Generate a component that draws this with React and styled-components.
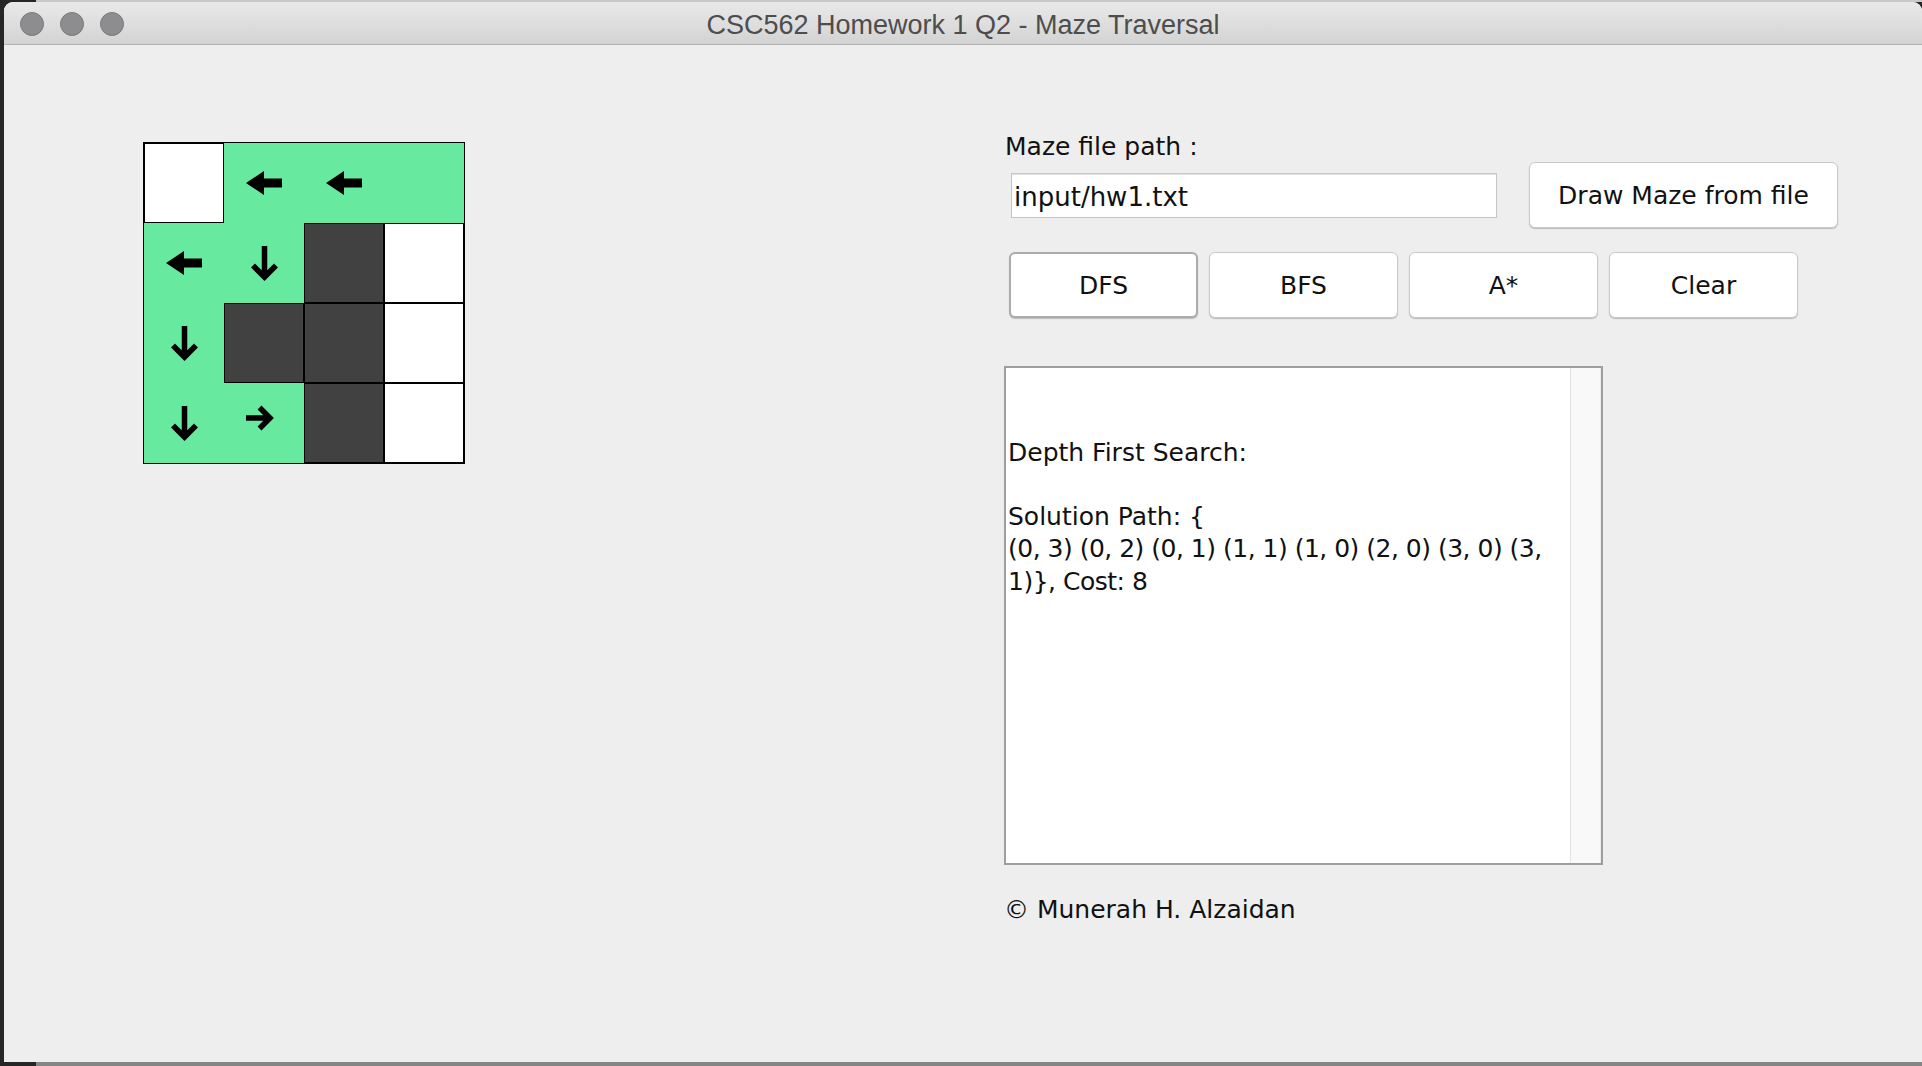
import React from 'react'
import styled, { createGlobalStyle } from 'styled-components'

const GlobalStyle = createGlobalStyle`
  html, body {
    margin: 0;
    padding: 0;
    background: #262626;
    overflow: hidden;
  }
`

const COLORS = {
  BG: '#eeeeee',
  GREEN: '#67e9a0',
  WALL: '#414141',
  TEXT: '#111111',
}

const UI_FONT = `"DejaVu Sans", "Liberation Sans", sans-serif`

const Desktop = styled.div`
  width: 1922px;
  height: 1066px;
  display: flex;
  flex-direction: column;
`

const EdgeStrip = styled.div`
  height: ${props => props.h}px;
  background: linear-gradient(to right, #262626 0 36px, ${props => props.tone} 36px);
`

const Window = styled.div`
  margin-left: 4px;
  width: 1918px;
  height: 1060px;
  display: flex;
  flex-direction: column;
  background: ${COLORS.BG};
  border-radius: 9px 9px 0 0;
  overflow: hidden;
`

const TitleBar = styled.div`
  position: relative;
  height: 42px;
  flex-shrink: 0;
  display: flex;
  align-items: center;
  justify-content: center;
  background: linear-gradient(#e9e9e9, #d3d3d3);
  border-bottom: 1px solid #b2b2b2;
`

const Lights = styled.div`
  position: absolute;
  left: 16px;
  top: 10px;
  display: flex;
  gap: 16px;
`

const Light = styled.span`
  width: 24px;
  height: 24px;
  border-radius: 50%;
  box-sizing: border-box;
  background: #8d8d8f;
  border: 1px solid #7a7a7c;
`

const Title = styled.div`
  padding-top: 5px;
  font-family: "Liberation Sans", Arial, sans-serif;
  font-size: 27px;
  color: #4d4d4d;
`

const Content = styled.div`
  flex: 1;
  display: flex;
  font-family: ${UI_FONT};
  color: ${COLORS.TEXT};
`

const LeftPane = styled.div`
  width: 1000px;
  box-sizing: border-box;
  padding: 97px 0 0 139px;
`

const MazeGrid = styled.div`
  display: grid;
  grid-template-columns: repeat(4, 80px);
  grid-template-rows: repeat(4, 80px);
  width: 320px;
  border: 1px solid #000;
`

const Cell = styled.div`
  display: flex;
  align-items: center;
  justify-content: center;
  background: ${props => props.kind === 'wall' ? COLORS.WALL : props.kind === 'open' ? '#ffffff' : COLORS.GREEN};
  box-shadow: ${props => props.kind === 'path' ? 'none' : 'inset 0 0 0 1px #000'};
`

const RightPane = styled.div`
  padding-top: 87px;
  display: flex;
  flex-direction: column;
`

const Label = styled.div`
  height: 30px;
  line-height: 30px;
  font-size: 25px;
  margin-left: 1px;
`

const FileRow = styled.div`
  display: flex;
  align-items: center;
  height: 66px;
`

const PathField = styled.div`
  margin-left: 7px;
  width: 486px;
  height: 45px;
  box-sizing: border-box;
  padding: 3px 0 0 2px;
  display: flex;
  align-items: center;
  background: #fff;
  border: 1px solid #c6c6c6;
  box-shadow: inset 0 1px 0 #e2e2e2;
  font-size: 26px;
`

const Button = styled.div`
  width: ${props => props.w}px;
  height: 66px;
  margin-left: ${props => props.ml || 0}px;
  box-sizing: border-box;
  display: flex;
  align-items: center;
  justify-content: center;
  background: #fff;
  border: ${props => props.focused ? '2px solid #ababab' : '1px solid #c8c8c8'};
  border-radius: 6px;
  box-shadow: 0 1px 1px rgba(0, 0, 0, 0.22);
  font-size: 25px;
`

const SearchRow = styled.div`
  display: flex;
  gap: 11px;
  margin: 24px 0 0 5px;
`

const OutputBox = styled.div`
  margin-top: 48px;
  width: 599px;
  height: 499px;
  box-sizing: border-box;
  display: flex;
  background: #fff;
  border: 2px solid #9e9e9e;
`

const OutputText = styled.div`
  flex: 1;
  padding: 4px 0 0 2px;
  font-size: 25px;
  line-height: 32.3px;
  white-space: pre;
  overflow: hidden;
`

const Line = styled.div`
  height: 32.3px;
  letter-spacing: ${props => props.tight ? '-0.5px' : 'normal'};
`

const ScrollTrack = styled.div`
  width: 29px;
  background: #f9f9f9;
  border-left: 1px solid #e4e4e4;
  border-right: 1px solid #ececec;
`

const Credit = styled.div`
  margin-top: 30px;
  line-height: 30px;
  font-size: 25px;
`

const ArrowLeft = () => (
  <svg width="36" height="24" viewBox="0 0 36 24">
    <path d="M0 12 L18 0 L18 7.5 L36 7.5 L36 16.5 L18 16.5 L18 24 Z" fill="#000" />
  </svg>
)

const ArrowDown = () => (
  <svg width="29" height="36" viewBox="0 0 29 36">
    <path d="M14.5 1 V32 M3 20.5 L14.5 32 L26 20.5" stroke="#000" strokeWidth="5.5" fill="none" />
  </svg>
)

const ArrowRight = () => (
  <svg width="29" height="26" viewBox="0 0 29 26" style={{ marginLeft: -10, marginTop: -10 }}>
    <path d="M1 13 H25 M14.5 2.5 L25 13 L14.5 23.5" stroke="#000" strokeWidth="5.5" fill="none" />
  </svg>
)

const MAZE = [
  ['open', 'path', 'path', 'path'],
  ['path', 'path', 'wall', 'open'],
  ['path', 'wall', 'wall', 'open'],
  ['path', 'path', 'wall', 'open'],
]

const ARROWS = {
  '0-1': <ArrowLeft />,
  '0-2': <ArrowLeft />,
  '1-0': <ArrowLeft />,
  '1-1': <ArrowDown />,
  '2-0': <ArrowDown />,
  '3-0': <ArrowDown />,
  '3-1': <ArrowRight />,
}

const OUTPUT = [
  { text: '' },
  { text: '' },
  { text: 'Depth First Search:' },
  { text: '' },
  { text: 'Solution Path: {' },
  { text: '(0, 3) (0, 2) (0, 1) (1, 1) (1, 0) (2, 0) (3, 0) (3,', tight: true },
  { text: '1)}, Cost: 8', tight: true },
]

const App = () => {
  return (
    <Desktop>
      <GlobalStyle />
      <EdgeStrip h={2} tone="#c9c9c9" />
      <Window>
        <TitleBar>
          <Lights>
            <Light />
            <Light />
            <Light />
          </Lights>
          <Title>CSC562 Homework 1 Q2 - Maze Traversal</Title>
        </TitleBar>

        <Content>
          <LeftPane>
            <MazeGrid>
              {MAZE.map((row, r) =>
                row.map((kind, c) => (
                  <Cell key={`${r}-${c}`} kind={kind}>
                    {ARROWS[`${r}-${c}`]}
                  </Cell>
                ))
              )}
            </MazeGrid>
          </LeftPane>

          <RightPane>
            <Label>Maze file path :</Label>
            <FileRow>
              <PathField>input/hw1.txt</PathField>
              <Button w={309} ml={32}>Draw Maze from file</Button>
            </FileRow>

            <SearchRow>
              <Button w={189} focused>DFS</Button>
              <Button w={189}>BFS</Button>
              <Button w={189}>A*</Button>
              <Button w={189}>Clear</Button>
            </SearchRow>

            <OutputBox>
              <OutputText>
                {OUTPUT.map((line, i) => (
                  <Line key={i} tight={line.tight}>{line.text}</Line>
                ))}
              </OutputText>
              <ScrollTrack />
            </OutputBox>

            <Credit>© Munerah H. Alzaidan</Credit>
          </RightPane>
        </Content>
      </Window>
      <EdgeStrip h={4} tone="#858585" />
    </Desktop>
  )
}

export default App
